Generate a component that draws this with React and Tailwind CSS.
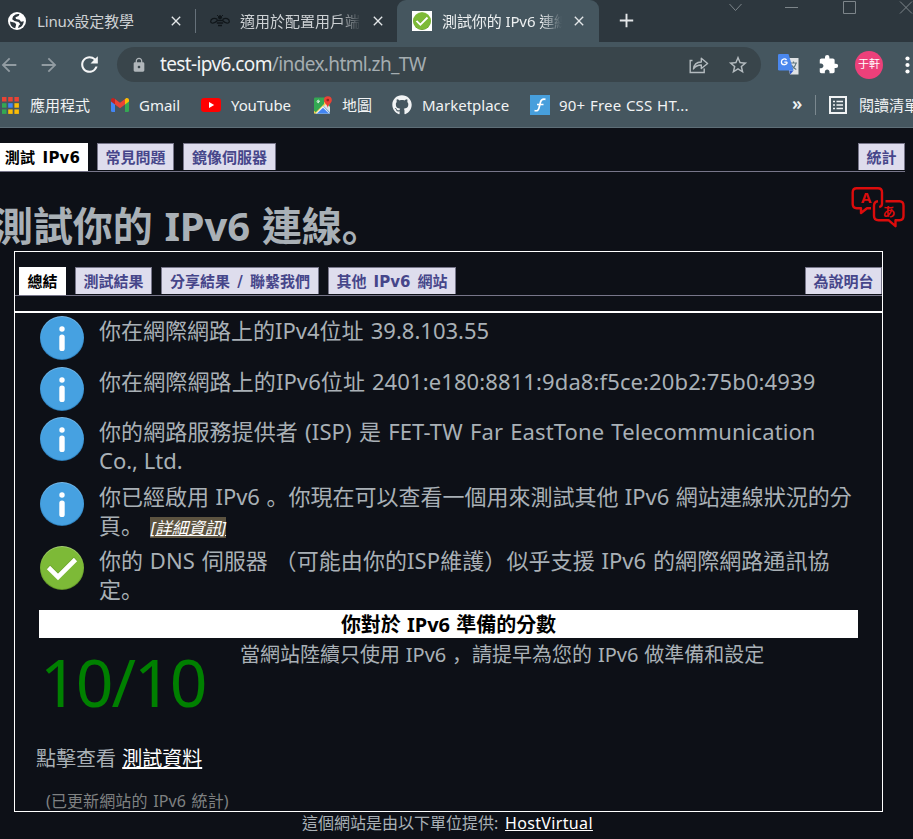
import React from "react";
import { MdRefresh, MdLock, MdStarOutline, MdExtension, MdArrowBack, MdArrowForward, MdClose, MdAdd } from "react-icons/md";
import { FaGithub } from "react-icons/fa";

const SANS = "font-['Noto_Sans','Noto_Sans_CJK_TC',sans-serif]";
const VERDANA = "font-['DejaVu_Sans','Noto_Sans_CJK_TC',sans-serif]";

// Full-width punctuation sitting at the lower left of its cell.
function Punct({ children, className = "" }) {
  return <span className={`font-['Noto_Sans_CJK_JP',sans-serif] leading-none ${className}`}>{children}</span>;
}

function GlobeIcon() {
  return (
    <svg width="18" height="18" viewBox="0 0 18 18" className="block shrink-0">
      <circle cx="9" cy="9" r="9" fill="#fff" />
      <path d="M2 9.5l5 1.2 1.2 1.8-1 3.8C4 15.500 2 13 2 9.500zM5 4.500C7 2 10 1.500 11.500 2.200L10.500 4 7.500 5.200 8 7l3.500.8 1.500 2 2.800-.6C15.500 13 13 15.500 10 16l.8-2.500 1.500-1.300-1.800-2.200L6.500 9 4.200 7.200z" fill="#2d373e" />
    </svg>
  );
}

function BeeIcon() {
  return (
    <svg width="20" height="14" viewBox="0 0 20 14" className="block shrink-0" fill="none" stroke="#10161a">
      <path d="M7.500 5.500C4 3.200.8 5 .7 7.500.8 10 4.500 9.500 7 7M12.500 5.500C16 3.200 19.200 5 19.300 7.500 19.200 10 15.500 9.500 13 7" strokeWidth="1.300" />
      <path d="M6.500 6.500h7M6.800 9h6.400M8 11.500h4" strokeWidth="1.600" />
      <path d="M7 1l1.500 1.500M13 1l-1.500 1.500" />
      <circle cx="10" cy="3.300" r="1.600" fill="#10161a" />
    </svg>
  );
}

function CheckIcon({ size }) {
  return (
    <svg width={size} height={size} viewBox="0 0 44 44" className="block shrink-0">
      <defs>
        <linearGradient id="okRim" x1="0" y1="0" x2="0" y2="1">
          <stop offset="0" stopColor="#a5cf72" />
          <stop offset=".4" stopColor="#7cb936" />
          <stop offset="1" stopColor="#5f9226" />
        </linearGradient>
      </defs>
      <circle cx="22" cy="22" r="22" fill="url(#okRim)" />
      <circle cx="22" cy="22" r="21" fill="#7dba37" />
      <path d="M8.500 20.500l9.500 9.500L35.500 12.500" fill="none" stroke="#5d9420" strokeWidth="5" opacity=".5" />
      <path d="M8.500 21.500l9.500 9.500L35.500 13.500" fill="none" stroke="#fff" strokeWidth="4.600" />
    </svg>
  );
}

function InfoIcon() {
  return (
    <svg width="44" height="44" viewBox="0 0 44 44" className="block shrink-0">
      <defs>
        <linearGradient id="infoRim" x1="0" y1="0" x2="0" y2="1">
          <stop offset="0" stopColor="#79b9e8" />
          <stop offset=".4" stopColor="#46a1e1" />
          <stop offset="1" stopColor="#2b7cb8" />
        </linearGradient>
      </defs>
      <circle cx="22" cy="22" r="22" fill="url(#infoRim)" />
      <circle cx="22" cy="22" r="21" fill="#46a1e1" />
      <circle cx="22" cy="13" r="2.700" fill="#fff" />
      <rect x="19.300" y="18.500" width="5.400" height="16.500" rx="2.600" fill="#fff" />
    </svg>
  );
}

function AppsIcon() {
  const colors = ["#ea4335", "#ea4335", "#ea4335", "#34a853", "#4285f4", "#fbbc05", "#34a853", "#fbbc05", "#fbbc05"];
  return (
    <svg width="17" height="17" viewBox="0 0 17 17" className="block shrink-0">
      {colors.map((c, i) => (
        <rect key={i} x={(i % 3) * 6.2} y={Math.floor(i / 3) * 6.2} width="4.500" height="4.500" fill={c} />
      ))}
    </svg>
  );
}

function GmailIcon() {
  return (
    <svg width="18" height="14" viewBox="0 0 18 14" className="block shrink-0">
      <path d="M0 2.500v10Q0 14 1.300 14H4V5.500z" fill="#4285f4" />
      <path d="M18 2.500v10q0 1.500-1.300 1.500H14V5.500z" fill="#34a853" />
      <path d="M14 1v5.500l4-3V2c0-1.800-2-2.500-3.200-1.600z" fill="#fbbc04" />
      <path d="M4 6.500V1l5 3.800L14 1v5.500l-5 3.800z" fill="#ea4335" />
      <path d="M0 2v1.500l4 3V1L3.200.4C2-.5 0 .2 0 2z" fill="#c5221f" />
    </svg>
  );
}

function YoutubeIcon() {
  return (
    <svg width="20" height="14" viewBox="0 0 20 14" className="block shrink-0">
      <rect width="20" height="14" rx="3.200" fill="#f00" />
      <path d="M8 4l5.200 3L8 10z" fill="#fff" />
    </svg>
  );
}

function MapsIcon() {
  return (
    <svg width="18" height="18" viewBox="0 0 18 18" className="block shrink-0">
      <rect y="1.500" width="16" height="16" rx="1.200" fill="#34a853" />
      <path d="M1 17.500L9 9.500l7 7v1z" fill="#4285f4" />
      <path d="M9 9.500l3-3 4 4.500v5.500z" fill="#dfe3e6" />
      <path d="M0 15.500L14.500 2 16 4 2.500 17.500H0z" fill="#fbd04b" />
      <path d="M0 13.800L10 4v4L1.500 16.500z" fill="#34a853" />
      <path d="M1.500 17.500L9 10l7 7.500z" fill="#f1f1f1" />
      <path d="M3 17.500L9 11.700l6 5.800z" fill="#4285f4" />
      <path d="M6 5.300H4.300v.9H5c-.3.800-1.900.6-1.900-.7S4.600 3.900 5.200 4.600" fill="none" stroke="#fff" strokeWidth=".8" />
      <path d="M13.800 12c-.3-3.200-3.900-4.600-3.900-7.900a3.900 3.900 0 0 1 7.900 0c0 3.300-3.600 4.700-4 7.900z" fill="#ea4335" />
      <circle cx="13.800" cy="4.100" r="1.400" fill="#96281f" />
    </svg>
  );
}

function FIcon() {
  return (
    <svg width="20" height="20" viewBox="0 0 20 20" className="block shrink-0">
      <rect width="20" height="20" fill="#479fdc" />
      <path d="M15.500 4.300c-3-.7-4.300.2-5 2.700L9 13c-.6 2.300-2 3.300-4.500 2.500M7 9.500h6.500" fill="none" stroke="#fff" strokeWidth="1.700" />
    </svg>
  );
}

function ReadingListIcon() {
  return (
    <svg width="18" height="18" viewBox="0 0 18 18" className="block shrink-0">
      <rect x="1" y="1" width="16" height="16" fill="none" stroke="#f1f3f4" strokeWidth="2" />
      <path d="M4 5.500h2M4 9h2M4 12.500h2M7.500 5.500H14M7.500 9H14M7.500 12.500H14" stroke="#f1f3f4" strokeWidth="1.700" />
    </svg>
  );
}

function ShareIcon() {
  return (
    <svg width="20" height="18" viewBox="0 0 20 18" className="block shrink-0" fill="none" stroke="#b4bbbf" strokeWidth="1.400">
      <path d="M3.500 4.500H1.200v12h14v-4" />
      <path d="M4.500 13c.4-4.500 3-6.800 7.800-7V2.200L18.600 7.500l-6.300 5V9C8.500 9 6.200 10.300 4.500 13z" strokeLinejoin="round" />
    </svg>
  );
}

function TranslateExtIcon() {
  return (
    <svg width="21" height="21" viewBox="0 0 21 21" className="block shrink-0">
      <path d="M8 4h12.500v16.500H12z" fill="#dfe2e4" />
      <path d="M12 9h7M15.500 7.500V9M18 9c-.5 3-2.500 5-4.800 6M13.500 11c.8 2 2.500 3.400 4.800 4.500" fill="none" stroke="#607780" strokeWidth="1.200" />
      <path d="M11.200 16.500h4.300l-3.200 4z" fill="#2f57c9" />
      <path d="M1.200 0h9.300l5 16.500H1.200Q0 16.500 0 15.300V1.200Q0 0 1.200 0z" fill="#4a87ee" />
      <path d="M9.200 8.200H6.300M9.200 8.200c0 3.400-5.800 3.400-5.800-.2 0-3 3.600-3.900 5.100-2" fill="none" stroke="#fff" strokeWidth="1.300" />
    </svg>
  );
}

function LanguageIcon() {
  return (
    <svg width="54" height="41" viewBox="-0.500 0 54 41" className="block shrink-0">
      <g fill="none" stroke="#dc0c0c" strokeWidth="2.400" strokeLinejoin="round">
        <path d="M19.500 21.200H15.500L9.500 26V21.200H5.200q-4-.2-4-4.200V5.200q0-4 4-4H26.500q4 0 4 4v11.500q0 2.600-2.800 3.400" />
        <path d="M26.500 14.200q-4 .5-4 4.500v10q0 4.500 4.500 4.500h10l7 6V33.200h4q4 0 4-4.500v-10q0-4.500-4-4.500H34" />
      </g>
      <text x="9.500" y="15.500" fontSize="15" fontWeight="700" fill="#dc0c0c" className={SANS}>A</text>
      <text x="31" y="28.500" fontSize="13" fontWeight="700" fill="#dc0c0c" className={SANS}>あ</text>
    </svg>
  );
}

function WindowControls() {
  return (
    <svg width="185" height="18" viewBox="0 0 185 18" className="block shrink-0" fill="none" stroke="#7d858a">
      <path d="M1.500 4L7.500 10.500 13.500 4M57 7.500H70M115.500 1.500h12v12h-12zM172 1.500L184 13.500M184 1.500L172 13.500" />
    </svg>
  );
}

function Tab({ children, active, className }) {
  const look = active
    ? "h-7 border-white bg-white text-black"
    : "h-[27px] border-[#77768a] bg-[#dedded] text-[#46468a]";
  return (
    <div className={`${VERDANA} flex shrink-0 items-center justify-center border border-b-0 pt-[2px] text-[15px] font-bold [word-spacing:2px] whitespace-nowrap ${look} ${className}`}>
      {children}
    </div>
  );
}

function Row({ icon, children, className }) {
  return (
    <li className={`flex shrink-0 items-start ${className}`}>
      {icon}
      <p className="ml-[15px] text-[22px] leading-[29px] whitespace-nowrap text-[#a9b0b6]">{children}</p>
    </li>
  );
}

function BrowserTab({ icon, title, className, fade }) {
  return (
    <div className={`flex h-full shrink-0 items-center ${className}`}>
      {icon}
      <span className={`ml-[10px] flex-1 overflow-hidden text-[15px] whitespace-nowrap ${fade ? "[mask-image:linear-gradient(to_right,#000_82%,transparent)]" : ""}`}>{title}</span>
      <MdClose size={16} className="ml-[9px] shrink-0 text-[#e3e6e8]" />
    </div>
  );
}

export default function App() {
  return (
    <div className={`${SANS} flex h-[839px] w-[913px] flex-col overflow-hidden bg-[#0d1017]`}>
      <header className="shrink-0">
        <div className="flex h-[42px] bg-[#2d373e] text-[#cdd1d4]">
          <BrowserTab icon={<GlobeIcon />} title={<span className="ml-px tracking-[-0.15px]">Linux設定教學</span>} className="w-[195px] pl-2 pr-[11px]" />
          <div className="mt-[9px] h-6 w-px bg-[#66717a]" />
          <BrowserTab fade icon={<BeeIcon />} title="適用於配置用戶端的" className="w-[201px] pl-[14px] pr-[11px]" />
          <div className="w-[202px] rounded-t-[9px] bg-[#45565f] text-[#edf0f1]">
            <BrowserTab fade icon={<span className="bg-white p-px"><CheckIcon size={18} /></span>} title={<span className="tracking-[-0.1px]">測試你的 IPv6 連線。</span>} className="pl-[15px] pr-[12px]" />
          </div>
          <MdAdd size={23} className="mt-[9px] ml-4 shrink-0 text-[#e3e6e8]" />
          <div className="ml-[90px] overflow-hidden"><WindowControls /></div>
        </div>
        <div className="flex h-[45px] items-center bg-[#45565f]">
          <MdArrowBack size={22} className="-ml-[2px] shrink-0 text-[#929ca2]" />
          <MdArrowForward size={22} className="ml-[18px] shrink-0 text-[#929ca2]" />
          <MdRefresh size={25} className="ml-[17px] shrink-0 text-[#f4f5f6]" />
          <div className="ml-[15px] flex h-[35px] w-[644px] shrink-0 items-center rounded-full bg-[#39454b] text-[19px]">
            <MdLock size={16} className="ml-[14px] shrink-0 text-[#b0b6ba]" />
            <span className="ml-[13px] tracking-[-0.62px] whitespace-nowrap text-[#f1f3f4]">test-ipv6.com<span className="text-[#a5adb1]">/index.html.zh_TW</span></span>
            <span className="ml-auto"><ShareIcon /></span>
            <MdStarOutline size={22} className="mr-[12px] ml-[18px] text-[#b4bbbf]" />
          </div>
          <span className="ml-[17px]"><TranslateExtIcon /></span>
          <MdExtension size={21} className="ml-[19px] shrink-0 text-white" />
          <div className="ml-[16px] flex size-7 shrink-0 items-center justify-center rounded-full bg-[#ec407a] text-[11px] text-white">于軒</div>
          <svg width="5" height="18" viewBox="0 0 5 18" className="ml-[22px] block shrink-0" fill="#fff">
            <circle cx="2.500" cy="2.500" r="2.100" /><circle cx="2.500" cy="9" r="2.100" /><circle cx="2.500" cy="15.500" r="2.100" />
          </svg>
        </div>
        <div className="flex h-[41px] items-start border-b border-[#5e6e77] bg-[#45565f] pt-2 text-[15px] text-[#f1f3f4]">
          <div className="flex h-5 w-[913px] shrink-0 items-center overflow-visible whitespace-nowrap">
            <div className="flex w-[109px] shrink-0 items-center gap-[11px] pl-[2px]"><AppsIcon /><span>應用程式</span></div>
            <div className="flex w-[92px] shrink-0 items-center gap-[10px] pl-[2px]"><GmailIcon /><span>Gmail</span></div>
            <div className="flex w-[113px] shrink-0 items-center gap-[10px]"><YoutubeIcon /><span className="tracking-[-0.1px]">YouTube</span></div>
            <div className="flex w-[78px] shrink-0 items-center gap-[10px]"><MapsIcon /><span>地圖</span></div>
            <div className="flex w-[138px] shrink-0 items-center gap-[10px]"><FaGithub size={20} className="shrink-0" /><span>Marketplace</span></div>
            <div className="flex w-[262px] shrink-0 items-center gap-[9px]"><FIcon /><span className="tracking-[0.2px] [word-spacing:0.5px]">90+ Free CSS HT...</span></div>
            <span className="mb-1 w-[23px] shrink-0 text-[18px] font-semibold">»</span>
            <div className="h-5 w-px shrink-0 bg-[#7b888f]" />
            <div className="ml-[13px] flex shrink-0 items-center gap-[12px]"><ReadingListIcon /><span>閱讀清單</span></div>
          </div>
        </div>
      </header>

      <main className="flex min-h-0 flex-1 flex-col">
        <nav className="mt-[15px] flex h-[29px] w-[905px] shrink-0 items-start border-b border-[#77768a]">
          <Tab active className="w-[88px] pr-[3px] tracking-[0.2px]">測試 IPv6</Tab>
          <Tab className="ml-[9px] w-[77px]">常見問題</Tab>
          <Tab className="ml-[9px] w-[93px]">鏡像伺服器</Tab>
          <Tab className="ml-auto w-[47px]">統計</Tab>
        </nav>
        <div className="flex h-[79px] w-[905px] shrink-0 justify-between">
          <h1 className="mt-[24px] -ml-[7px] text-[40px] leading-[60px] font-bold tracking-[-0.1px] [word-spacing:1.5px] whitespace-nowrap text-[#a9b0b6]">測試你的 IPv6 連線<Punct>。</Punct></h1>
          <div className="mt-[15px]"><LanguageIcon /></div>
        </div>

        <section className="ml-[14px] flex h-[561px] w-[869px] shrink-0 flex-col border border-white">
          <nav className="mt-[15px] flex h-[29px] shrink-0 items-start border-b border-[#77768a] pl-1">
            <Tab active className="w-[47px]">總結</Tab>
            <Tab className="ml-[9px] w-[77px]">測試結果</Tab>
            <Tab className="ml-[9px] w-[158px]">分享結果 / 聯繫我們</Tab>
            <Tab className="ml-[9px] w-[128px]">其他 IPv6 網站</Tab>
            <Tab className="ml-auto w-[77px]">為說明台</Tab>
          </nav>
          <div className="mt-[15px] h-[2px] shrink-0 bg-white" />
          <ul className="mt-[3px] ml-[25px] flex shrink-0 flex-col">
            <Row className="h-[51px] [word-spacing:1.5px]" icon={<InfoIcon />}>你在網際網路上的IPv4位址 39.8.103.55</Row>
            <Row className="h-[50px] tracking-[0.11px] [word-spacing:1px]" icon={<InfoIcon />}>你在網際網路上的IPv6位址 2401:e180:8811:9da8:f5ce:20b2:75b0:4939</Row>
            <Row className="h-[65px]" icon={<InfoIcon />}><span className="tracking-[0.1px] [word-spacing:1.4px]">你的網路服務提供者 (ISP) 是 FET-TW Far EastTone Telecommunication</span><br />Co., Ltd.</Row>
            <Row className="h-[64px] [word-spacing:0.7px]" icon={<InfoIcon />}>
              你已經啟用 IPv6 <Punct>。</Punct>你現在可以查看一個用來測試其他 IPv6 網站連線狀況的分<br />頁<Punct>。</Punct>{" "}
              <a className="ml-px inline-block h-[21px] bg-[#5c5340] text-[16.500px] leading-[21px] text-white italic underline">[詳細資訊]</a>
            </Row>
            <Row className="h-[64px] tracking-[0.08px] [word-spacing:0.9px]" icon={<CheckIcon size={44} />}>你的 DNS 伺服器 （可能由你的ISP維護）似乎支援 IPv6 的網際網路通訊協<br />定<Punct>。</Punct></Row>
          </ul>
          <h2 className="ml-6 h-7 w-[819px] shrink-0 bg-white pt-px text-center text-[20px] leading-7 font-bold tracking-[-0.05px] [word-spacing:1.2px] text-black">你對於 IPv6 準備的分數</h2>
          <div className="flex h-[100px] shrink-0">
            <div className="ml-[25px] w-[200px] text-[66px] leading-[86px] tracking-[-2px] text-[#008000]">10/10</div>
            <p className="mt-[3px] text-[20px] leading-7 [word-spacing:0.6px] whitespace-nowrap text-[#a9b0b6]">當網站陸續只使用 IPv6 <Punct>，</Punct>請提早為您的 IPv6 做準備和設定</p>
          </div>
          <p className="mt-[7px] ml-[21px] shrink-0 text-[20px] leading-7 [word-spacing:1px] text-[#a9b0b6]">點擊查看 <a className="text-white underline">測試資料</a></p>
          <p className="mt-[16px] ml-[31px] shrink-0 text-[16px] leading-6 tracking-[0.1px] [word-spacing:1.4px] text-[#7f8182]">(已更新網站的 IPv6 統計)</p>
        </section>
        <footer className="h-[27px] shrink-0 pl-[302px] text-[16px] leading-[23px] [word-spacing:1.500px] text-[#a9b0b6]">這個網站是由以下單位提供<span className="mr-px">:</span> <a className="tracking-[0.35px] text-white underline">HostVirtual</a></footer>
      </main>
    </div>
  );
}
